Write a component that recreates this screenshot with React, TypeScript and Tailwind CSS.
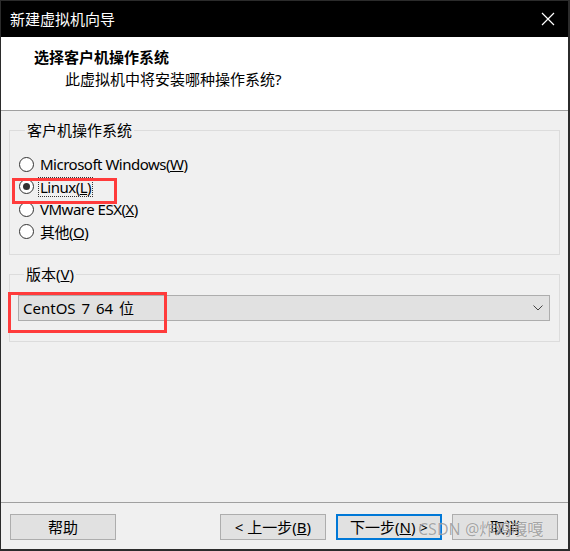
import React from "react";

const ui = "font-['Noto_Sans','Noto_Sans_CJK_SC',sans-serif]";

const Radio = ({ checked, children }: { checked?: boolean; children: React.ReactNode }) => {
  return (
    <div className="flex h-[22.5px] items-center">
      <span className="flex h-[15px] w-[15px] items-center justify-center rounded-full border border-[#333333] bg-white">
        {checked && <span className="h-[7px] w-[7px] rounded-full bg-[#333333]" />}
      </span>
      <span
        className={
          "tracking-[-0.5px] " +
          (checked ? "ml-[5px] px-[1px] leading-[18px] outline outline-1 outline-dotted outline-[#333333]" : "ml-[6px]")
        }
      >
        {children}
      </span>
    </div>
  );
};

const Button = ({ children, primary }: { children: React.ReactNode; primary?: boolean }) => {
  return (
    <button
      className={
        "flex h-[26px] w-[106px] items-center justify-center bg-[#e1e1e1] text-[15px] text-black " +
        (primary ? "border-2 border-[#0078d7]" : "border border-[#adadad]")
      }
    >
      {children}
    </button>
  );
};

export default function App() {
  return (
    <div className={`relative flex h-[551px] w-[570px] flex-col border-t border-l border-r-2 border-b-2 border-[#2b2b2b] bg-[#f0f0f0] text-[15px] text-black ${ui}`}>
      {/* Title bar */}
      <div className="flex h-[36px] items-center justify-between bg-black pl-[9px] pr-[13px] text-white">
        <span>新建虚拟机向导</span>
        <svg width="14" height="14" viewBox="0 0 14 14">
          <path d="M1 1 L13 13 M13 1 L1 13" stroke="#ffffff" strokeWidth="1.2" />
        </svg>
      </div>

      {/* Header */}
      <div className="flex h-[74px] flex-col border-b border-[#a0a0a0] bg-white pl-[33px] pt-[10px]">
        <div className="font-bold leading-[21px]">选择客户机操作系统</div>
        <div className="ml-[31px] leading-[22px]">此虚拟机中将安装哪种操作系统?</div>
      </div>

      {/* Body */}
      <div className="flex flex-1 flex-col px-[8px]">
        <fieldset className="mt-[9px] border border-[#dcdcdc] pl-[9px] pb-[11px] pt-[13px]">
          <legend className="ml-[6px] px-[2px] leading-[20px]">客户机操作系统</legend>
          <Radio>Microsoft Windows(<u>W</u>)</Radio>
          <Radio checked>Linux(<u>L</u>)</Radio>
          <Radio>VMware ESX(<u>X</u>)</Radio>
          <Radio>其他(<u>O</u>)</Radio>
        </fieldset>

        <fieldset className="mt-[9px] border border-[#dcdcdc] pl-[8px] pr-[9px] pb-[20px] pt-[11px]">
          <legend className="ml-[6px] px-[2px] leading-[20px]">
            版本(<u>V</u>)
          </legend>
          <div className="flex h-[26px] items-center justify-between border border-[#adadad] bg-[#e1e1e1] pl-[4px] pr-[6px]">
            <span className="[word-spacing:2px]">CentOS 7 64 位</span>
            <svg width="10" height="6" viewBox="0 0 10 6">
              <path d="M0.5 0.5 L5 5 L9.5 0.5" fill="none" stroke="#444444" strokeWidth="1" />
            </svg>
          </div>
        </fieldset>
      </div>

      {/* Footer */}
      <div className="flex h-[47px] items-start border-t border-[#a0a0a0] pl-[9px] pr-[10px] pt-[11px]">
        <Button>帮助</Button>
        <div className="ml-auto flex gap-[10px]">
          <Button>
            &lt; 上一步(<u>B</u>)
          </Button>
          <Button primary>
            下一步(<u>N</u>) &gt;
          </Button>
          <Button>取消</Button>
        </div>
      </div>

      {/* Annotations */}
      <div className="absolute left-[11px] top-[177px] h-[26px] w-[105px] border-[3px] border-[#ff3b3b]" />
      <div className="absolute left-[7px] top-[291px] h-[41px] w-[159px] border-[3px] border-[#ff3b3b]" />
      <div className="absolute left-[417px] top-[516px] text-[16px] text-[rgba(120,120,120,0.65)] [text-shadow:0_0_1px_rgba(255,255,255,0.8)]">
        CSDN @炸鸡嘎嘎
      </div>
    </div>
  );
}
